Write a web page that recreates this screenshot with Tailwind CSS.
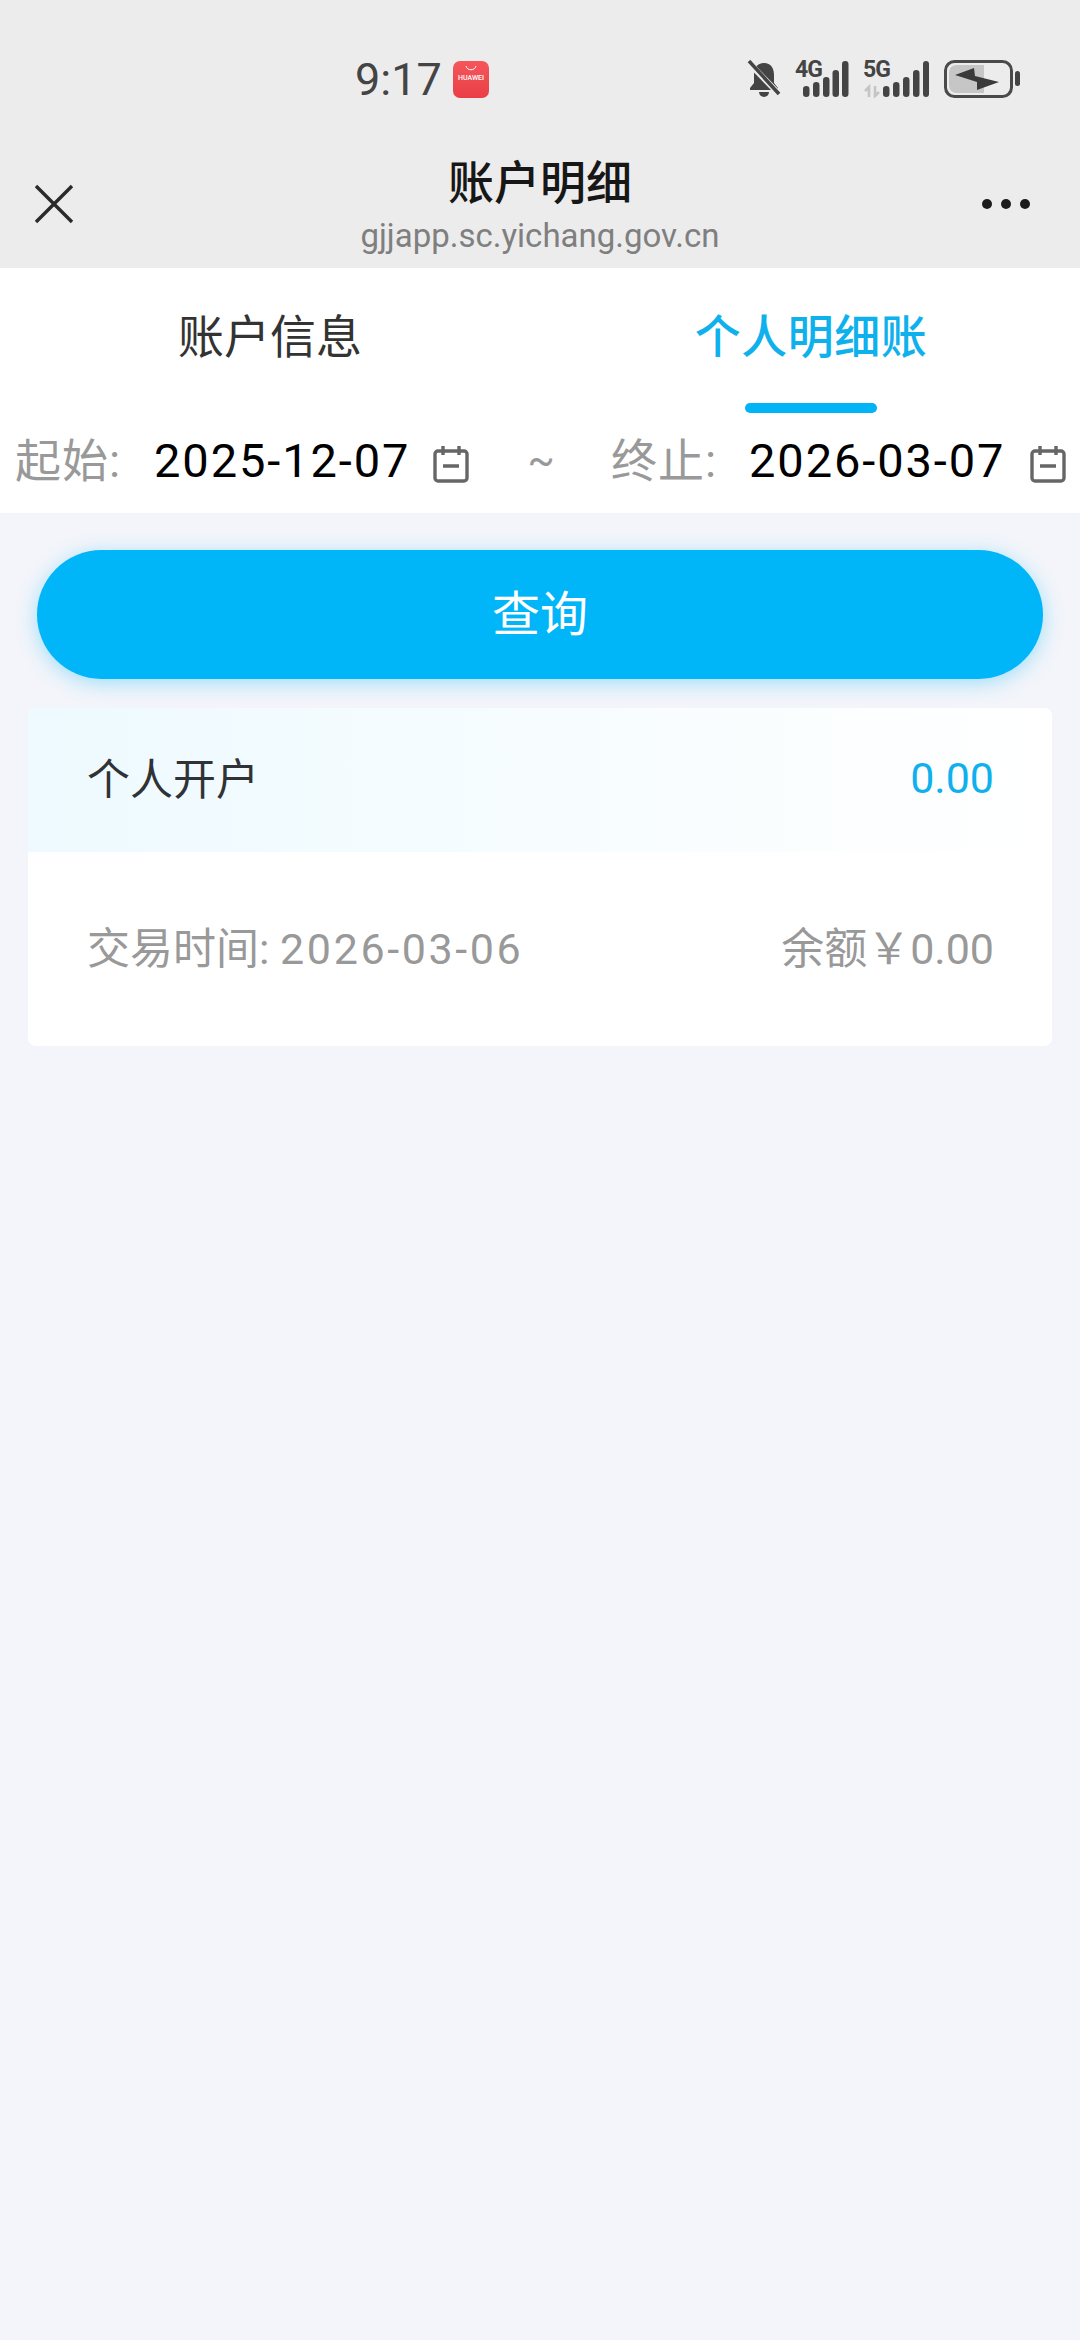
<!DOCTYPE html>
<html lang="zh-CN">
<head>
    <meta charset="UTF-8">
    <meta name="viewport" content="width=device-width, initial-scale=1.0">
    <title>账户明细</title>
    <script src="https://cdn.jsdelivr.net/npm/@tailwindcss/browser@4"></script>
</head>
<body class="bg-[#f3f5fa] font-['Roboto','Noto_Sans_CJK_SC',sans-serif]">
<div class="w-[1080px] h-[2340px] overflow-hidden">

    <!-- status bar + title bar -->
    <div class="h-[268px] bg-[#ececec]">
        <div class="h-[158px] flex items-center pl-[355px]">
            <span class="text-[45px] leading-none text-[#444] w-[98px]">9:17</span>
            <div class="w-[36px] h-[37px] rounded-[7px] bg-gradient-to-b from-[#f4565c] to-[#ea3e46] flex flex-col items-center pt-[4px]">
                <svg width="14" height="8" viewBox="0 0 14 8"><path d="M2 1c1 5 9 5 10 0" fill="none" stroke="#fff" stroke-width="1"/></svg>
                <span class="text-[7px] leading-[10px] text-white font-medium">HUAWEI</span>
            </div>
            <!-- bell -->
            <svg class="ml-[258px]" width="34" height="38" viewBox="0 0 34 38">
                <path d="M17 3c-7 0-10 5-10 12v8l-4 5v2h28v-2l-4-5v-8c0-7-3-12-10-12z" fill="#444"/>
                <path d="M12 32h10a5 5 0 0 1-10 0z" fill="#444"/>
                <path d="M1 2l32 33" stroke="#ececec" stroke-width="6"/>
                <path d="M2 1l30 33" stroke="#444" stroke-width="3.5"/>
            </svg>
            <!-- 4G -->
            <div class="relative ml-[13px] w-[55px] h-[38px]">
                <span class="absolute left-[1px] top-0 text-[23px] leading-[20px] font-bold text-[#444] tracking-[-1px]">4G</span>
                <svg class="absolute left-0 top-0" width="55" height="38" viewBox="0 0 55 38">
                    <g fill="#444">
                        <rect x="9" y="26" width="6.5" height="11" rx="3.2"/><rect x="19" y="22" width="6.5" height="15" rx="3.2"/><rect x="29" y="17" width="6.5" height="20" rx="3.2"/><rect x="38.5" y="10" width="6.5" height="27" rx="3.2"/><rect x="48" y="1" width="6.5" height="36" rx="3.2"/>
                    </g>
                </svg>
            </div>
            <!-- 5G -->
            <div class="relative ml-[12px] w-[68px] h-[38px]">
                <span class="absolute left-[2px] top-0 text-[23px] leading-[20px] font-bold text-[#444] tracking-[-1px]">5G</span>
                <svg class="absolute left-0 top-0" width="68" height="38" viewBox="0 0 68 38">
                    <path d="M8 37V27l-4 4M14 26v10l4-4" fill="none" stroke="#c4c4c4" stroke-width="2.6"/>
                    <g fill="#444">
                        <rect x="22" y="26" width="6.5" height="11" rx="3.2"/><rect x="32" y="22" width="6.5" height="15" rx="3.2"/><rect x="42" y="17" width="6.5" height="20" rx="3.2"/><rect x="52" y="10" width="6.5" height="27" rx="3.2"/><rect x="62" y="1" width="6" height="36" rx="3"/>
                    </g>
                </svg>
            </div>
            <!-- battery -->
            <svg class="ml-[13px]" width="80" height="40" viewBox="0 0 80 40">
                <rect x="3.5" y="2.5" width="66" height="35" rx="9" fill="#ececec" stroke="#4a4a4a" stroke-width="3"/>
                <path d="M7 13a8 8 0 0 1 7-7h28v28H14a8 8 0 0 1-7-7z" fill="#c6c6c6"/>
                <path d="M13 16l19-7 1 8 24 6-22 8v-8z" fill="#3a3a3a"/>
                <rect x="73" y="12" width="5" height="15" rx="2.5" fill="#444"/>
            </svg>
        </div>
        <div class="relative h-[110px] flex flex-col items-center">
            <svg class="absolute left-[34px] top-[26px]" width="40" height="40" viewBox="0 0 40 40">
                <path d="M2 2l36 36M38 2L2 38" stroke="#2a2a2a" stroke-width="3.4"/>
            </svg>
            <div class="text-[46px] leading-[50px] font-medium text-[#171717]">账户明细</div>
            <div class="text-[33px] leading-[40px] text-[#7f7f7f] mt-[8px]">gjjapp.sc.yichang.gov.cn</div>
            <div class="absolute left-[982px] top-[41px] flex gap-[9px]">
                <span class="w-[10px] h-[10px] rounded-full bg-[#1c1c1c]"></span>
                <span class="w-[10px] h-[10px] rounded-full bg-[#1c1c1c]"></span>
                <span class="w-[10px] h-[10px] rounded-full bg-[#1c1c1c]"></span>
            </div>
        </div>
    </div>

    <!-- tabs + date range -->
    <div class="h-[245px] bg-white">
        <div class="flex h-[145px]">
            <div class="w-[540px] pt-[40px] text-center text-[46px] leading-[58px] text-[#333]">账户信息</div>
            <div class="w-[540px] pl-[2px] pt-[40px] flex flex-col items-center text-[46px] leading-[58px] font-medium text-[#0fb1ec]">
                <span class="tracking-[0.5px]">个人明细账</span>
                <span class="w-[132px] h-[10px] rounded-full bg-[#00b4f5] mt-[37px]"></span>
            </div>
        </div>
        <div class="flex items-center h-[96px] pl-[15px]">
            <span class="w-[139px] text-[46px] text-[#999] tracking-[1px]">起始:</span>
            <span class="w-[279px] text-[47px] text-black tracking-[1.9px]">2025-12-07</span>
            <svg class="mt-[5px]" width="36" height="38" viewBox="0 0 36 38"><rect x="2" y="6" width="32" height="30" rx="3" fill="none" stroke="#666" stroke-width="3.4"/><path d="M10 1v9M26 1v9M10 21h16" fill="none" stroke="#666" stroke-width="3.4"/></svg>
            <span class="w-[142px] pl-[2px] text-center text-[40px] text-[#999]">~</span>
            <span class="w-[138px] text-[46px] text-[#999] tracking-[1px]">终止:</span>
            <span class="w-[281px] text-[47px] text-black tracking-[1.9px]">2026-03-07</span>
            <svg class="mt-[5px]" width="36" height="38" viewBox="0 0 36 38"><rect x="2" y="6" width="32" height="30" rx="3" fill="none" stroke="#666" stroke-width="3.4"/><path d="M10 1v9M26 1v9M10 21h16" fill="none" stroke="#666" stroke-width="3.4"/></svg>
        </div>
    </div>

    <!-- query button -->
    <div class="mx-[37px] mt-[37px] h-[129px] rounded-full bg-[#00b5f8] shadow-[0_4px_20px_rgba(0,181,248,0.35)] flex items-center justify-center text-[48px] text-white">查询</div>

    <!-- record card -->
    <div class="mx-[28px] mt-[29px] h-[338px] rounded-[8px] bg-white overflow-hidden">
        <div class="h-[144px] pl-[59px] pr-[58px] flex items-center justify-between bg-gradient-to-r from-[#eefaff] to-white">
            <span class="text-[43px] text-[#303336]">个人开户</span>
            <span class="text-[43px] text-[#0fb1ec] -mt-[3px]">0.00</span>
        </div>
        <div class="h-[194px] pl-[59px] pr-[58px] flex items-center justify-between text-[43px] text-[#999]">
            <span>交易时间: <span class="tracking-[2.6px]">2026-03-06</span></span>
            <span>余额￥0.00</span>
        </div>
    </div>
</div>
</body>
</html>
